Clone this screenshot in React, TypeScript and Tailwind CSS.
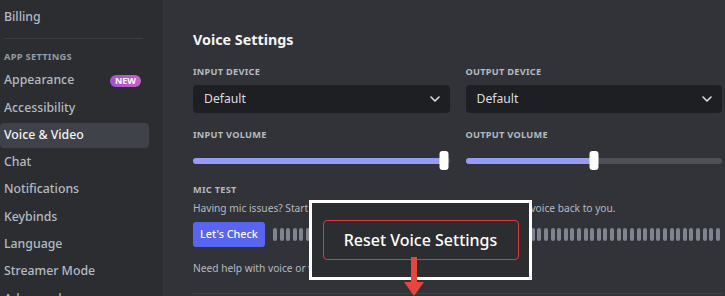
import React from "react";

const navItems = [
  "Appearance",
  "Accessibility",
  "Voice & Video",
  "Chat",
  "Notifications",
  "Keybinds",
  "Language",
  "Streamer Mode",
  "Advanced",
];

const Chevron = () => (
  <svg width="10" height="6" viewBox="0 0 10 6" fill="none">
    <path d="M1 1l4 4 4-4" stroke="#dbdee1" strokeWidth="1.6" strokeLinecap="round" strokeLinejoin="round" />
  </svg>
);

const Select = () => (
  <div className="mt-[7px] flex h-[28px] items-center justify-between rounded-[4px] bg-[#1e1f22] pl-[11px] pr-[10px] text-[12.2px] text-[#dbdee1]">
    <span>Default</span>
    <Chevron />
  </div>
);

const Slider = ({ pct }: { pct: number }) => (
  <div className="relative mt-[10px] flex h-[19px] items-center">
    <div className="h-[6px] w-full rounded-full bg-[#4e5058]">
      <div className="h-full rounded-full bg-[#949cf7]" style={{ width: `${pct}%` }} />
    </div>
    <div
      className="absolute top-0 h-[19px] w-[9px] -translate-x-1/2 rounded-[3px] bg-white"
      style={{ left: `${pct}%` }}
    />
  </div>
);

const Label = ({ children }: { children: React.ReactNode }) => (
  <div className="text-[9.2px] font-bold uppercase leading-[12px] tracking-[0.03em] text-[#b5bac1]">
    {children}
  </div>
);

export default function App() {
  return (
    <div
      className="flex h-[296px] w-[725px] overflow-hidden bg-[#313338]"
      style={{ fontFamily: '"Noto Sans", sans-serif' }}
    >
      {/* sidebar */}
      <div className="w-[163px] shrink-0 bg-[#2b2d31] pt-[5px]">
        <div className="flex h-[25px] items-center pl-[4px] text-[12.3px] font-medium text-[#b5bac1]">Billing</div>
        <div className="ml-[4px] mt-[8px] h-px w-[139px] bg-[#3b3d44]" />
        <div className="ml-[4px] mt-[12px] text-[9.3px] font-bold uppercase leading-[12px] tracking-[0.03em] text-[#949ba4]">
          App Settings
        </div>
        <div className="mt-[5px] flex w-[149px] flex-col gap-[2.3px]">
          {navItems.map((item) => (
            <div
              key={item}
              className={`flex h-[25px] shrink-0 items-center justify-between rounded-[4px] pl-[4px] pr-[8px] text-[12.3px] font-medium ${
                item === "Voice & Video" ? "bg-[#404249] text-[#f2f3f5]" : "text-[#b5bac1]"
              }`}
            >
              <span>{item}</span>
              {item === "Appearance" && (
                <span className="flex h-[12px] w-[31px] items-center justify-center rounded-full bg-gradient-to-r from-[#a44fd6] to-[#cb5fc4] text-[9px] font-bold leading-none text-white">
                  NEW
                </span>
              )}
            </div>
          ))}
        </div>
      </div>

      {/* main */}
      <div className="relative flex-1 pl-[30px] pt-[30px]">
        <div className="text-[14.3px] font-bold leading-[20px] text-[#f2f3f5]">Voice Settings</div>

        <div className="mt-[16px] grid w-[529px] grid-cols-2 gap-x-[16px]">
          <div>
            <Label>Input Device</Label>
            <Select />
          </div>
          <div>
            <Label>Output Device</Label>
            <Select />
          </div>
          <div className="mt-[16px]">
            <Label>Input Volume</Label>
            <Slider pct={98} />
          </div>
          <div className="mt-[16px]">
            <Label>Output Volume</Label>
            <Slider pct={50} />
          </div>
        </div>

        <div className="mt-[14px]">
          <Label>Mic Test</Label>
          <div className="mt-[5px] whitespace-nowrap text-[10.2px] leading-[14px] text-[#b5bac1]">
            Having mic issues? Start a test and say something fun—we'll play your voice back to you.
          </div>
          <div className="mt-[7px] flex items-center gap-[8px]">
            <button className="h-[25px] w-[72px] rounded-[3px] bg-[#5865f2] text-[10.8px] font-medium text-white">
              Let's Check
            </button>
            <div className="flex w-[447px] justify-between">
              {Array.from({ length: 68 }).map((_, i) => (
                <div key={i} className="h-[13px] w-[4px] rounded-full bg-[#80848e]" />
              ))}
            </div>
          </div>
          <div className="mt-[14px] whitespace-nowrap text-[10.2px] leading-[14px] text-[#b5bac1]">
            Need help with voice or video? Check out our troubleshooting guide.
          </div>
          <div className="mt-[18px] h-px w-[529px] bg-[#3f4147]" />
        </div>

        {/* annotation overlay */}
        <div className="absolute left-[146px] top-[200px] flex h-[80px] w-[223px] items-center justify-center border-[3px] border-white bg-[#2b2d31]">
          <div className="flex h-[40px] w-[196px] items-center justify-center rounded-[4px] border border-[#e0393c] text-[16px] font-medium text-white">
            Reset Voice Settings
          </div>
        </div>
        <svg className="absolute left-[240px] top-[257px]" width="22" height="39" viewBox="0 0 22 39">
          <rect x="8" y="0" width="6" height="27" fill="#e8453c" />
          <path d="M1 25h20l-10 14z" fill="#e8453c" />
        </svg>
      </div>
    </div>
  );
}
